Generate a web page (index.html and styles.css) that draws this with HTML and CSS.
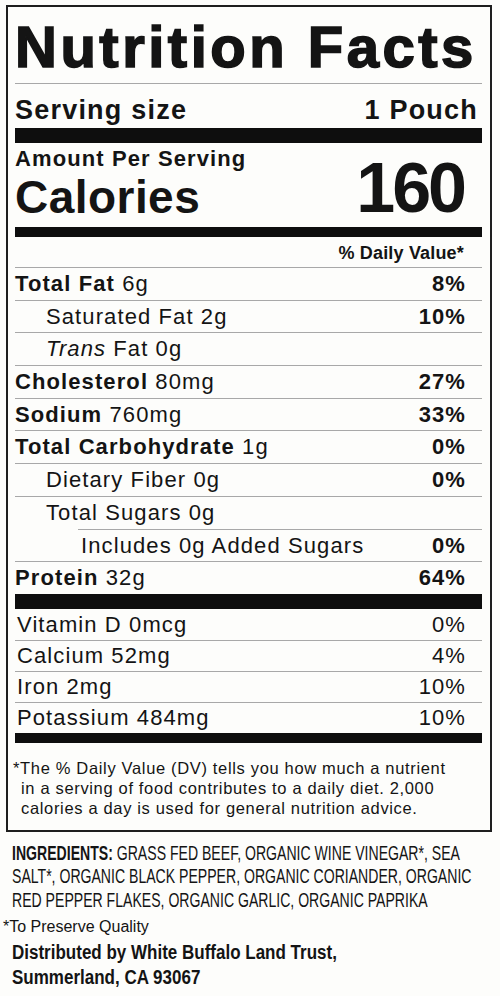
FILE: index.html
```html
<!DOCTYPE html>
<html lang="en">
<head>
<meta charset="utf-8">
<title>Nutrition Facts</title>
<link rel="stylesheet" href="styles.css">
</head>
<body>
<section class="label">
  <h1 class="title">Nutrition Facts</h1>
  <div class="serving"><span>Serving size</span><span>1 Pouch</span></div>
  <div class="bar bar-lg"></div>
  <div class="cal">
    <div class="cal-left">
      <div class="amount">Amount Per Serving</div>
      <div class="calories">Calories</div>
    </div>
    <div class="kcal">160</div>
  </div>
  <div class="bar bar-md"></div>
  <div class="dv-head">% Daily Value*</div>
  <ul class="nutrients">
    <li class="row"><span><b>Total Fat</b> 6g</span><b>8%</b></li>
    <li class="row sub"><span>Saturated Fat 2g</span><b>10%</b></li>
    <li class="row sub"><span><i>Trans</i> Fat 0g</span></li>
    <li class="row"><span><b>Cholesterol</b> 80mg</span><b>27%</b></li>
    <li class="row"><span><b>Sodium</b> 760mg</span><b>33%</b></li>
    <li class="row"><span><b>Total Carbohydrate</b> 1g</span><b>0%</b></li>
    <li class="row sub"><span>Dietary Fiber 0g</span><b>0%</b></li>
    <li class="row sub"><span>Total Sugars 0g</span></li>
    <li class="row subsub"><span>Includes 0g Added Sugars</span><b>0%</b></li>
    <li class="row"><span><b>Protein</b> 32g</span><b>64%</b></li>
  </ul>
  <div class="bar bar-lg"></div>
  <ul class="vitamins">
    <li class="vrow"><span>Vitamin D 0mcg</span><span>0%</span></li>
    <li class="vrow"><span>Calcium 52mg</span><span>4%</span></li>
    <li class="vrow"><span>Iron 2mg</span><span>10%</span></li>
    <li class="vrow"><span>Potassium 484mg</span><span>10%</span></li>
  </ul>
  <div class="bar bar-md"></div>
  <p class="footnote">*The % Daily Value (DV) tells you how much a nutrient<br>in a serving of food contributes to a daily diet. 2,000<br>calories a day is used for general nutrition advice.</p>
</section>
<p class="ingredients"><b>INGREDIENTS:</b> GRASS FED BEEF, ORGANIC WINE VINEGAR*, SEA<br>SALT*, ORGANIC BLACK PEPPER, ORGANIC CORIANDER, ORGANIC<br>RED PEPPER FLAKES, ORGANIC GARLIC, ORGANIC PAPRIKA</p>
<p class="preserve">*To Preserve Quality</p>
<p class="distributed">Distributed by White Buffalo Land Trust,<br>Summerland, CA 93067</p>
</body>
</html>
```

FILE: styles.css
```css
* { box-sizing: border-box; }
html, body { margin: 0; padding: 0; }
body {
  background: #fdfdfb;
  color: #141414;
  font-family: "Liberation Sans", Arial, Helvetica, sans-serif;
  width: 500px;
  height: 996px;
  overflow: hidden;
}
.label {
  margin: 5px 8px 0 6px;
  border: 2px solid #1e1e1e;
  padding: 0 8px 0 7px;
  letter-spacing: 0.04em;
}
.title {
  margin: 0;
  padding-top: 4px;
  font-size: 58px;
  line-height: 72px;
  font-weight: 700;
  letter-spacing: 3.5px;
  -webkit-text-stroke: 1.6px #141414;
  border-bottom: 1px solid #a8a8a8;
  white-space: nowrap;
}
.serving {
  display: flex;
  justify-content: space-between;
  font-size: 27px;
  font-weight: 700;
  line-height: 32px;
  letter-spacing: 0.045em;
  padding: 10px 4px 2px 0;
}
.bar { background: #0e0e0e; }
.bar-lg { height: 15px; }
.bar-md { height: 10px; }
.cal {
  display: flex;
  justify-content: space-between;
  align-items: flex-end;
  padding: 4px 18px 4px 0;
  font-weight: 700;
}
.amount { font-size: 22px; line-height: 24px; letter-spacing: 0.05em; }
.calories { font-size: 46px; line-height: 52px; letter-spacing: 0.01em; }
.kcal { font-size: 70px; line-height: 69px; letter-spacing: -3px; }
.dv-head {
  text-align: right;
  font-size: 18px;
  font-weight: 700;
  line-height: 20px;
  letter-spacing: 0.01em;
  padding: 6px 18px 4px 0;
}
.nutrients, .vitamins {
  list-style: none;
  margin: 0;
  padding: 0;
}
.row {
  display: flex;
  justify-content: space-between;
  border-top: 1px solid #a8a8a8;
  height: 32.7px;
  font-size: 22px;
  line-height: 31.7px;
  letter-spacing: 0.05em;
  padding-right: 16px;
}
.row b { font-weight: 700; }
.sub { padding-left: 31px; }
.subsub { margin-left: 63px; padding-left: 3px; }
.vrow {
  display: flex;
  justify-content: space-between;
  border-top: 1px solid #a8a8a8;
  height: 31px;
  font-size: 22px;
  line-height: 30px;
  letter-spacing: 0.05em;
  padding: 0 16px 0 2px;
}
.vrow:first-child { border-top: 0; padding-top: 1px; }
.footnote {
  margin: 0;
  padding: 15px 0 12px 6px;
  font-size: 16.5px;
  line-height: 20px;
  text-indent: -8px;
  letter-spacing: 0.04em;
}
.ingredients, .preserve, .distributed {
  margin: 0;
  white-space: nowrap;
  transform-origin: left top;
}
.ingredients {
  margin: 9px 0 0 12px;
  font-size: 21px;
  line-height: 23.5px;
  transform: scaleX(0.67);
}
.ingredients b { font-weight: 700; }
.preserve {
  margin: 6px 0 0 3px;
  font-size: 16px;
  line-height: 20px;
}
.distributed {
  margin: 3px 0 0 12px;
  font-size: 20px;
  line-height: 25px;
  font-weight: 700;
  transform: scaleX(0.85);
}
```
